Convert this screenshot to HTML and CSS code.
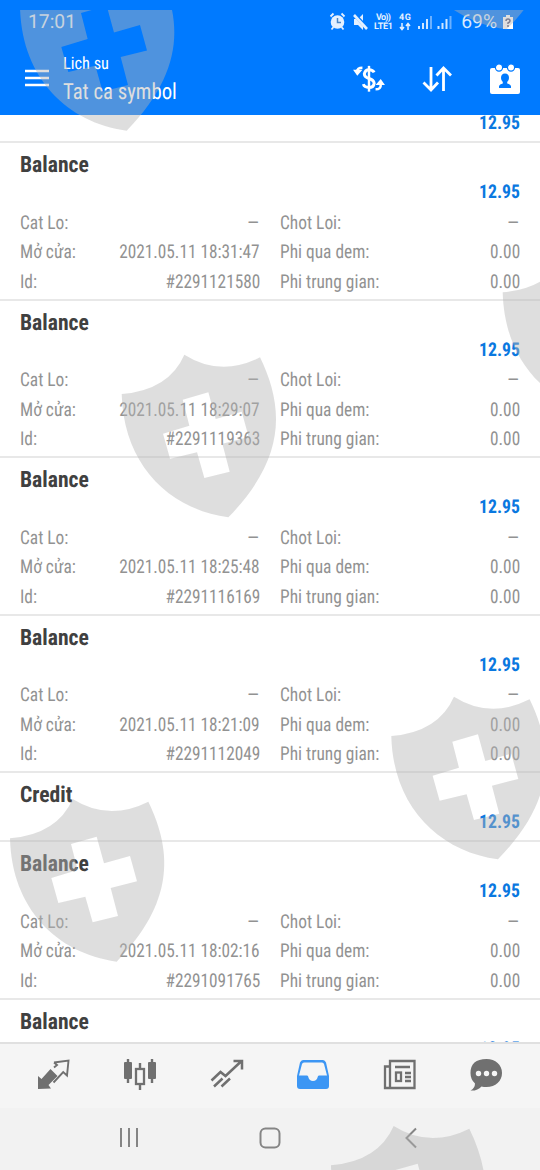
FILE: index.html
```html
<!DOCTYPE html>
<html lang="vi">
<head>
<meta charset="utf-8">
<title>Lich su</title>
<link rel="stylesheet" href="styles.css">
</head>
<body>
<div class="screen">
  <header class="header">
    <div class="status">
      <span class="clock">17:01</span>
      <svg class="status-icons" width="124" height="22" viewBox="0 0 124 22">
        <g fill="none" stroke="#e4f0ff" stroke-width="1.8"><path d="M1.500 5.500l3-3M12.500 2.500l3 3M4.500 16l-2 2.500M12.500 16l2 2.500"/></g>
        <circle cx="8.500" cy="11" r="6.800" fill="#e4f0ff"/><path d="M8.500 7v4.500h3.500" fill="none" stroke="#4a86c8" stroke-width="1.500"/>
        <path d="M25 8h4l5-5v16l-5-5h-4z" fill="#e4f0ff"/><path d="M24 2l15 16" stroke="#007aff" stroke-width="4"/><path d="M25 4l13 14" stroke="#e4f0ff" stroke-width="2.600"/>
        <text x="47" y="9" textLength="15">Vo))</text><text x="45" y="18" textLength="19">LTE1</text>
        <text x="70" y="9" textLength="12">4G</text>
        <path d="M73 12v6M71 16l2 2.500 2-2.500M79 19v-6M77 15l2-2.500 2 2.500" fill="none" stroke="#e4f0ff" stroke-width="1.500"/>
        <path d="M90 18v-3M94 18v-6M98 18V8M109.500 18v-3M113.500 18v-6M117.500 18V8" stroke="#d0e6ff" stroke-width="2"/>
        <path d="M102 18V5M121.500 18V5" stroke="#6bb0ff" stroke-width="2"/>
      </svg>
      <span class="percent">69%</span>
      <svg width="12" height="16" viewBox="0 0 12 16"><path d="M1 3h3V1h4v2h3v12H1z" fill="#fff"/><path d="M4 7q0-2 2-2t2 2q0 1-2 2v1M6 11v2" fill="none" stroke="#557" stroke-width="1.500"/></svg>
    </div>
    <div class="toolbar">
      <svg class="menu" width="24" height="18" viewBox="0 0 24 18"><path d="M0 2h24M0 9h24M0 16h24" stroke="#fff" stroke-width="2.500"/></svg>
      <div class="titles"><div class="title-small"><span>Lich su</span></div><div class="title-big"><span>Tat ca symbol</span></div></div>
      <svg class="tool-icon" width="32" height="30" viewBox="0 0 34 32" fill="none" stroke="#fff">
        <path d="M22.500 9Q21 6 17 6t-5 4.500Q12 14 17 15.500t5.500 5Q22 25 17 25t-6-3.500" stroke-width="3.200"/><path d="M17 2v27.500" stroke-width="2.600"/>
        <path d="M10 4Q4 4 4.500 8M24 27q6 0 5.500-5" stroke-width="2.700"/><path d="M0 6h10L4.500 12.500zM24 22.500h10L29.500 16z" fill="#fff" stroke="none"/>
      </svg>
      <svg class="tool-icon" width="32" height="28" viewBox="0 0 32 28" fill="none" stroke="#fff" stroke-width="2.800"><path d="M10 2v23M2.500 17.500L10 25l7-7.500M22.500 26V3M15.500 10.500l7-7.500 7.500 7.500"/></svg>
      <svg class="tool-icon" width="32" height="32" viewBox="0 0 32 32"><path d="M3 5h26q2 0 2 2v22q0 2-2 2H3q-2 0-2-2V7q0-2 2-2z" fill="#fff"/><circle cx="10" cy="4.500" r="3.600" fill="#fff" stroke="#007aff" stroke-width="1.200"/><circle cx="22" cy="4.500" r="3.600" fill="#fff" stroke="#007aff" stroke-width="1.200"/><path d="M12 15q0-4.500 4-4.500t4 4.500q0 2.500-1.800 4v1.500q3.300.7 3.800 2.500v2H10v-2q.5-1.800 3.800-2.500V19Q12 17.500 12 15z" fill="#007aff"/></svg>
    </div>
  </header>
  <main class="list" id="list"></main>
  <nav class="tabs">
    <svg width="34" height="34" viewBox="0 0 34 34"><path d="M1 18l3.500 3L13.500 11l7 7-9 9 2.500 3.500L1 31z" fill="#707070"/><path d="M17 4.500l14.500-2-1.500 15-3.800-3.500L16.500 24.500M17 9.500L20 7l-3-2.500" fill="none" stroke="#707070" stroke-width="1.900"/></svg>
    <svg width="34" height="34" viewBox="0 0 34 34"><path d="M5 1v24M29 1v24M17 5v6M17 26v6" stroke="#707070" stroke-width="2.400"/><rect x="1" y="4" width="8" height="17" rx="1" fill="#707070"/><rect x="25" y="4" width="8" height="17" rx="1" fill="#707070"/><rect x="13" y="11" width="8" height="15" fill="none" stroke="#707070" stroke-width="2.300"/></svg>
    <svg width="34" height="34" viewBox="0 0 34 34"><path d="M1.500 22.500L10.500 14l5 4L31 3.500M23.500 3H32v8.500M4 28.500l8.500-8M11.500 28.500l8.500-8" fill="none" stroke="#707070" stroke-width="2.500"/></svg>
    <svg width="34" height="34" viewBox="0 0 34 34"><path fill-rule="evenodd" d="M7 2h20q2 0 3 2.500L33 18v10q0 3-3 3H4q-3 0-3-3V18L4 4.500Q5 2 7 2zM8 4.500q-1.500 0-2 1.500L3 17.500h8q1.300 0 1.300 1.500 1 4 4.700 4t4.700-4q0-1.500 1.300-1.500h8L28 6q-.5-1.500-2-1.500z" fill="#3c96f4"/></svg>
    <svg width="34" height="34" viewBox="0 0 34 34" fill="none" stroke="#707070" stroke-width="2.300"><path d="M7 3h24.500v27H2V8.500h5zM7 8v22M12 9h15M22 15h6M22 19h6M22 23h6"/><rect x="13" y="14.500" width="5" height="8.500"/></svg>
    <svg width="34" height="34" viewBox="0 0 34 34"><path d="M17.500 1C26.500 1 33 7 33 15s-6.500 14-15.500 14q-2.800 0-5-.6Q8.500 33 1.500 32.500 6 30 6 25.500 1.500 21.500 1.500 15 1.500 1 17.500 1z" fill="#707070"/><g fill="#f5f5f5"><circle cx="9.500" cy="15.500" r="2.700"/><circle cx="17.500" cy="15.500" r="2.700"/><circle cx="25.500" cy="15.500" r="2.700"/></g></svg>
  </nav>
  <div class="system">
    <svg width="22" height="22" viewBox="0 0 22 22"><path d="M3 1v19M11 1v19M19 1v19" stroke="#858585" stroke-width="2"/></svg>
    <svg width="22" height="22" viewBox="0 0 22 22"><rect x="1.500" y="1.500" width="19" height="19" rx="5" fill="none" stroke="#858585" stroke-width="2"/></svg>
    <svg width="22" height="22" viewBox="0 0 22 22"><path d="M16 1.500L6.500 11l9.500 9.500" fill="none" stroke="#858585" stroke-width="2"/></svg>
  </div>
  <svg class="shields" width="540" height="1170" viewBox="0 0 540 1170">
    <defs>
      <clipPath id="area"><rect y="10" width="540" height="1160"/></clipPath>
      <path id="shield" fill-rule="evenodd" transform="scale(.33333)" d="M0 0Q142-12 188-118Q296-50 415-110C490 45 490 195 320 370C140 345 5 210 0 0ZM183 17L203 95L124 119L145 194L226 175L248 252L324 233L302 149L381 129L360 53L282 75L260-5Z"/>
    </defs>
    <g clip-path="url(#area)">
      <use href="#shield" transform="translate(20 7.400)"/>
      <use href="#shield" transform="translate(400 -94)"/>
      <use href="#shield" transform="translate(502.700 292.300)"/>
      <use href="#shield" transform="translate(121.700 394)"/>
      <use href="#shield" transform="translate(391.300 736)"/>
      <use href="#shield" transform="translate(10 838.300)"/>
      <use href="#shield" transform="translate(331 1165.300)"/>
    </g>
  </svg>
</div>
<script src="app.js"></script>
</body>
</html>
```

FILE: styles.css
```css
* { box-sizing: border-box; }
body { margin: 0; }
.screen {
  position: relative;
  width: 540px;
  height: 1170px;
  overflow: hidden;
  display: flex;
  flex-direction: column;
  background: #fff;
  font-family: "Roboto Condensed", Roboto, sans-serif;
  font-stretch: 75%;
  text-rendering: geometricPrecision;
}
.header { height: 115px; background: #007aff; color: #fff; flex: none; }
.status { height: 43px; display: flex; align-items: center; padding: 0 26px 0 28px; }
.clock, .percent { font-family: Roboto, sans-serif; font-stretch: 100%; font-size: 19.3px; color: #d8eaff; }
.status-icons { margin-left: auto; margin-right: 8px; }
.status-icons text { font: 700 9px Roboto, sans-serif; fill: #e4f0ff; }
.percent { margin-right: 5px; }
.toolbar { height: 72px; display: flex; align-items: center; padding: 0 19px 0 25px; }
.menu { margin-top: -2px; }
.titles { margin-left: 14px; flex: 1; }
.title-small { font-size: 17px; line-height: 24px; }
.title-big { font-size: 22.3px; line-height: 32px; margin-bottom: -2px; }
.titles span, .name span, .amount span, .pair span { display: inline-block; transform: scaleX(.93); transform-origin: left; }
.title-small span { transform: scaleX(.96); }
.tool-icon + .tool-icon { margin-left: 36px; }
.list { flex: 1; min-height: 0; overflow: hidden; }
.row { border-top: 2px solid #e8e8e8; padding: 6px 20px 3px; height: 157.5px; }
.row.short { height: 69px; }
.row.cut { margin-top: -42.6px; }
.name { height: 30px; line-height: 32px; font-size: 22.5px; font-weight: 700; color: #404040; }
.name span { transform: scaleX(.96); }
.amount { height: 22.5px; line-height: 25px; font-size: 19px; font-weight: 700; color: #0a78e0; text-align: right; }
.amount span { transform-origin: right; }
.details { margin-top: 6px; display: grid; grid-template-columns: 240px 240px; column-gap: 20px; }
.pair { display: flex; justify-content: space-between; height: 29.3px; line-height: 30px; font-size: 19px; color: #929292; white-space: nowrap; }
.pair span { transform: scaleX(.915); }
.pair .value { transform: scaleX(.908); transform-origin: right; }
.pair .dash { transform: scaleX(1.2); }
.tabs { flex: none; height: 66px; border-top: 2px solid #e0e0e0; background: #f5f5f5; display: flex; justify-content: space-between; align-items: center; padding: 0 37px 3px; }
.system { flex: none; height: 62px; background: #f2f2f2; display: grid; grid-template-columns: repeat(3, 22px); column-gap: 119px; align-content: center; justify-content: center; padding-bottom: 2px; }
.shields { position: absolute; left: 0; top: 0; fill: rgba(180, 180, 180, .44); pointer-events: none; }
```

FILE: app.js
```javascript
const rows = [
  { name: "Credit", kind: "short cut" },
  { name: "Balance", time: "2021.05.11 18:31:47", id: "#2291121580" },
  { name: "Balance", time: "2021.05.11 18:29:07", id: "#2291119363" },
  { name: "Balance", time: "2021.05.11 18:25:48", id: "#2291116169" },
  { name: "Balance", time: "2021.05.11 18:21:09", id: "#2291112049" },
  { name: "Credit", kind: "short" },
  { name: "Balance", time: "2021.05.11 18:02:16", id: "#2291091765" },
  { name: "Balance", kind: "short" }
];
const pair = (label, value) =>
  `<div class="pair"><span class="label">${label}</span><span class="value${value === "–" ? " dash" : ""}">${value}</span></div>`;
document.getElementById("list").innerHTML = rows.map(r => `
  <section class="row ${r.kind || ""}">
    <div class="name"><span>${r.name}</span></div>
    <div class="amount"><span>12.95</span></div>
    ${r.time ? `<div class="details">
      ${pair("Cat Lo:", "–")}${pair("Chot Loi:", "–")}
      ${pair("Mở cửa:", r.time)}${pair("Phi qua dem:", "0.00")}
      ${pair("Id:", r.id)}${pair("Phi trung gian:", "0.00")}
    </div>` : ""}
  </section>`).join("");
```
